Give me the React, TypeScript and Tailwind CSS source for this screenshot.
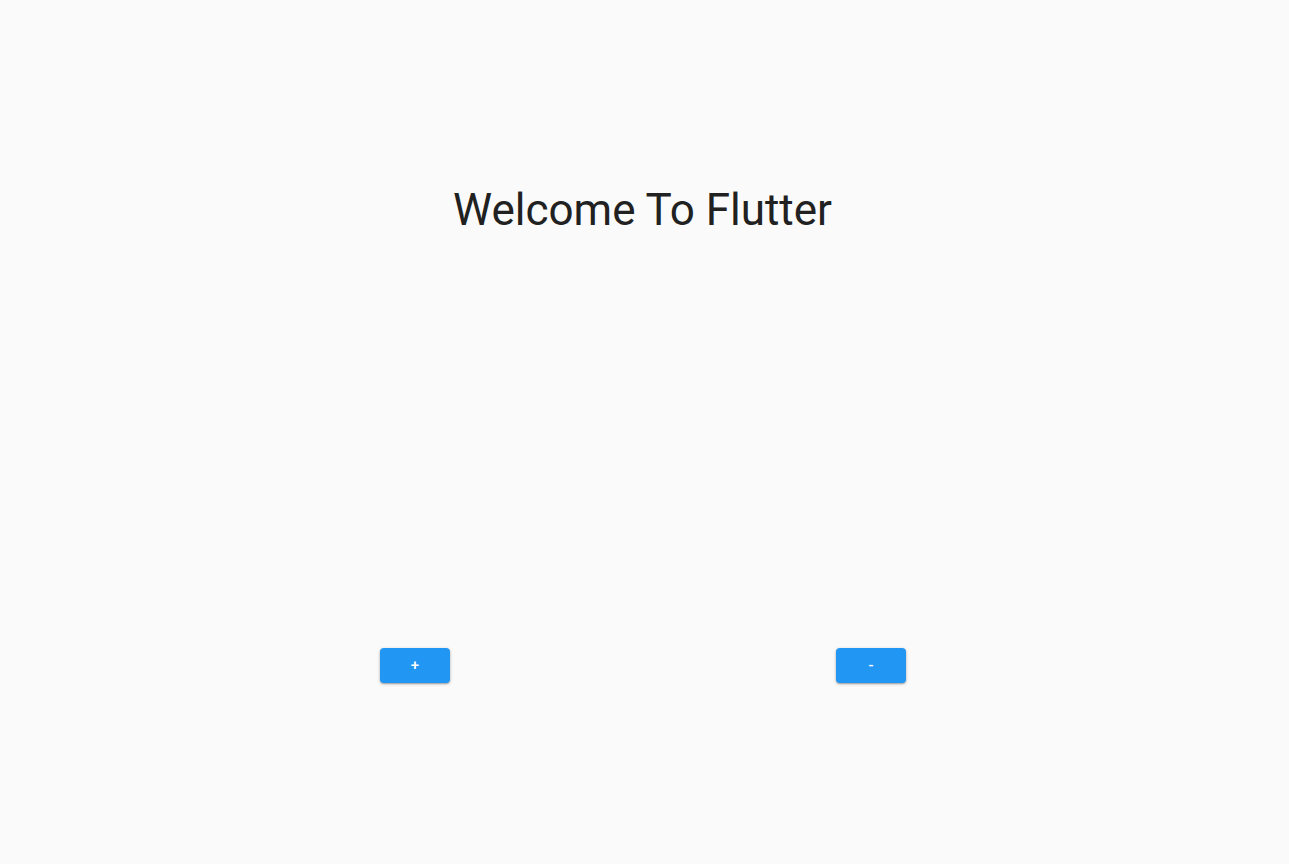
export default function App() {
  return (
    <div className="min-h-screen w-full bg-[#fafafa] font-['Roboto',sans-serif]">
      {/* Title */}
      <div className="flex justify-center pt-[180px] pr-1">
        <h1 className="text-[44px] leading-[60px] font-normal text-[#212121]">
          Welcome To Flutter
        </h1>
      </div>

      {/* Counter buttons */}
      <div className="flex gap-[386px] pl-[380px] mt-[408px]">
        <button className="w-[70px] h-[35px] rounded bg-[#2196f3] text-white text-[15px] font-medium shadow-[0_1px_3px_rgba(0,0,0,0.3),0_1px_1px_rgba(0,0,0,0.14)]">
          +
        </button>
        <button className="w-[70px] h-[35px] rounded bg-[#2196f3] text-white text-[15px] font-medium shadow-[0_1px_3px_rgba(0,0,0,0.3),0_1px_1px_rgba(0,0,0,0.14)]">
          -
        </button>
      </div>
    </div>
  )
}
